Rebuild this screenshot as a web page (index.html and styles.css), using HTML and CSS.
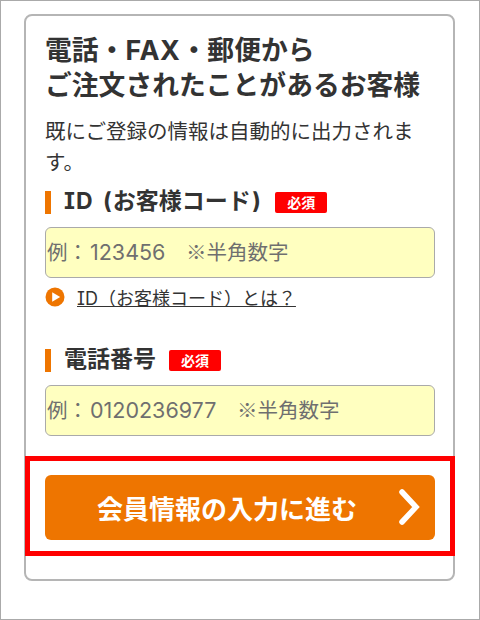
FILE: index.html
```html
<!DOCTYPE html>
<html lang="ja">
<head>
    <meta charset="UTF-8">
    <title>電話・FAX・郵便からご注文されたことがあるお客様</title>
    <link rel="stylesheet" href="styles.css">
</head>
<body>
    <div class="frame">
        <form class="card">
            <h2 class="title">電話・<span class="title-latin">FAX</span>・郵便から<br>ご注文されたことがあるお客様</h2>
            <p class="lead">既にご登録の情報は自動的に出力されます。</p>

            <div class="field-label">
                <span class="label-text"><span class="label-latin">ID (</span>お客様コード<span class="label-paren">)</span></span>
                <span class="badge">必須</span>
            </div>
            <div class="text-input">例：<span class="digits">123456</span>　※半角数字</div>
            <div class="help">
                <svg class="help-icon" viewBox="0 0 20 20" aria-hidden="true">
                    <circle cx="10" cy="10" r="9.5" fill="#ee7500"/>
                    <path d="M7.2 5.2 L15.2 10 L7.2 14.8 Z" fill="#fff"/>
                </svg>
                <a class="help-link" href="#">ID（お客様コード）とは？</a>
            </div>

            <div class="field-label second">
                <span class="label-text">電話番号</span>
                <span class="badge">必須</span>
            </div>
            <div class="text-input">例：<span class="digits">0120236977</span>　※半角数字</div>

            <div class="highlight">
                <button class="submit" type="button">
                    <span>会員情報の入力に進む</span>
                    <svg class="submit-arrow" viewBox="0 0 22 36" aria-hidden="true">
                        <path d="M4 3 L18 18 L4 33" fill="none" stroke="#fff" stroke-width="5.5" stroke-linecap="round" stroke-linejoin="miter"/>
                    </svg>
                </button>
            </div>
        </form>
    </div>
</body>
</html>
```

FILE: styles.css
```css
* {
    box-sizing: border-box;
}

body {
    margin: 0;
    font-family: Inter, "Noto Sans CJK JP", sans-serif;
    font-feature-settings: "cv08";
    color: #333;
    background-color: #fff;
}

.frame {
    width: 480px;
    height: 620px;
    padding: 13px 23px 0;
    border: 1px solid #aaa;
}

.card {
    width: 431px;
    height: 567px;
    padding: 17px 19px 0;
    border: 2px solid #b5b5b5;
    border-radius: 8px;
}

.title {
    margin: 0;
    font-size: 26.8px;
    line-height: 35px;
    font-weight: bold;
}

.title-latin {
    letter-spacing: 0.7px;
}

.lead {
    margin: 13px 0 0;
    font-size: 20.5px;
    line-height: 31px;
}

.field-label {
    display: flex;
    align-items: center;
    height: 23px;
    margin-top: 13px;
    border-left: 6px solid #ee7500;
}

.field-label.second {
    margin-top: 42px;
}

.label-text {
    margin-left: 13px;
    padding-bottom: 8px;
    font-size: 23px;
    font-weight: bold;
    white-space: nowrap;
}

.label-latin {
    letter-spacing: 1px;
    word-spacing: 3px;
}

.label-paren {
    margin: 0 1.5px;
}

.badge {
    width: 52px;
    height: 21px;
    margin-left: 13px;
    border-radius: 2px;
    background-color: #f00;
    color: #fff;
    font-size: 14px;
    line-height: 21px;
    font-weight: bold;
    text-align: center;
}

.text-input {
    width: 390px;
    height: 51px;
    margin-top: 13px;
    padding: 0 1px;
    border: 1px solid #aaa;
    border-radius: 6px;
    background-color: #ffffc0;
    color: #6f6f6f;
    font-family: "Noto Sans CJK JP", sans-serif;
    font-size: 20.5px;
    line-height: 46px;
    white-space: nowrap;
}

.digits {
    margin-left: 2px;
    font-family: Inter, sans-serif;
    font-size: 21.5px;
}

.help {
    display: flex;
    align-items: center;
    height: 20px;
    margin-top: 9px;
}

.help-icon {
    width: 20px;
    height: 20px;
}

.help-link {
    margin-left: 12px;
    color: #333;
    font-size: 18px;
}

.highlight {
    height: 100px;
    margin: 20px -21px 0 -20px;
    padding: 14px 15px 0;
    border: 5px solid #f00;
}

.submit {
    display: flex;
    align-items: center;
    justify-content: center;
    position: relative;
    width: 390px;
    height: 65px;
    padding: 0 26px 0 0;
    border: none;
    border-radius: 6px;
    background-color: #ee7500;
    color: #fff;
    font-family: inherit;
    font-size: 26px;
    font-weight: bold;
}

.submit-arrow {
    position: absolute;
    right: 15px;
    top: 14px;
    width: 22px;
    height: 36px;
}
```
